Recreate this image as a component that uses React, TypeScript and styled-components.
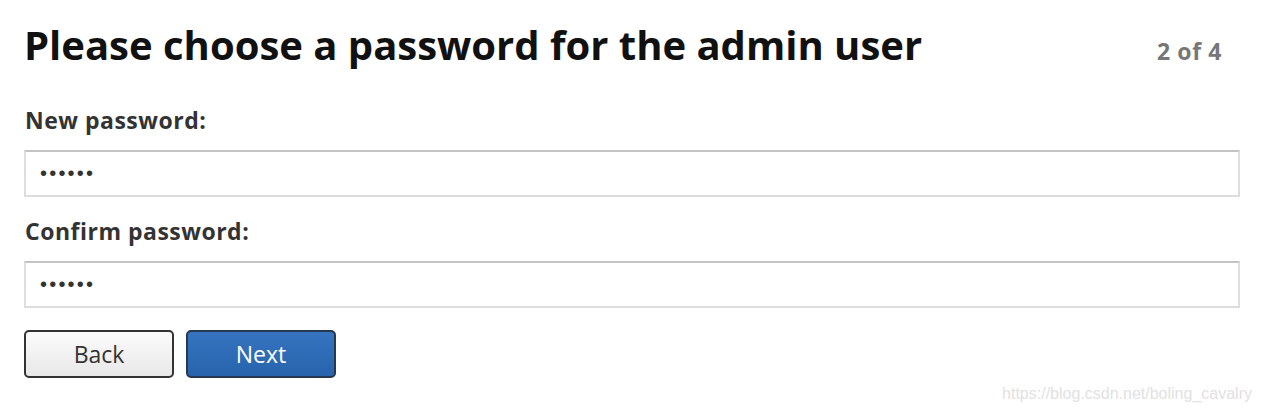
import React from 'react';
import styled, { createGlobalStyle } from 'styled-components';

const GlobalStyle = createGlobalStyle`
  body {
    margin: 0;
    background: #ffffff;
    font-family: 'Open Sans', 'Liberation Sans', sans-serif;
  }
`;

const Page = styled.div`
  position: relative;
  width: 1262px;
  height: 412px;
  padding: 0 22px 0 24px;
  box-sizing: border-box;
  overflow: hidden;
`;

const Header = styled.div`
  display: flex;
  align-items: baseline;
  justify-content: space-between;
  padding-top: 19px;
  padding-right: 18px;
`;

const Title = styled.h1`
  margin: 0;
  font-size: 40px;
  font-weight: 700;
  color: #111111;
  line-height: 52px;
`;

const Step = styled.span`
  font-size: 23px;
  font-weight: 700;
  color: #777777;
  letter-spacing: 0.6px;
`;

const Form = styled.form`
  display: flex;
  flex-direction: column;
  margin-top: 35px;
`;

const Label = styled.label`
  font-size: 23px;
  font-weight: 700;
  color: #333333;
  line-height: 28px;
  letter-spacing: 0.5px;
  margin-bottom: 16px;
  padding-left: 1px;
`;

const Input = styled.input`
  height: 47px;
  box-sizing: border-box;
  border: 2px solid #dddddd;
  border-top-color: #c4c4c4;
  padding: 0 14px;
  font-size: 20px;
  letter-spacing: 2.2px;
  color: #333333;
  font-family: 'Liberation Sans', sans-serif;
  margin-bottom: 20px;
  outline: none;
`;

const Actions = styled.div`
  display: flex;
  gap: 12px;
  margin-top: 2px;
`;

const Button = styled.button<{ $primary?: boolean }>`
  width: 150px;
  height: 48px;
  box-sizing: border-box;
  border-radius: 5px;
  border: 2px solid ${(p) => (p.$primary ? '#263950' : '#333333')};
  background: ${(p) =>
    p.$primary
      ? 'linear-gradient(#3574c0, #2864ad)'
      : 'linear-gradient(#fbfbfb, #e8e8e8)'};
  color: ${(p) => (p.$primary ? '#ffffff' : '#333333')};
  font-family: 'Open Sans', 'Liberation Sans', sans-serif;
  font-size: 23px;
  font-weight: 400;
  padding: 0;
  cursor: pointer;
`;

const Watermark = styled.div`
  position: absolute;
  right: 10px;
  bottom: 9px;
  font-family: 'Liberation Sans', sans-serif;
  font-size: 16px;
  color: #e2e2e2;
`;

export default function App() {
  return (
    <Page>
      <GlobalStyle />
      <Header>
        <Title>Please choose a password for the admin user</Title>
        <Step>2 of 4</Step>
      </Header>
      <Form onSubmit={(e) => e.preventDefault()}>
        <Label>New password:</Label>
        <Input type="password" defaultValue="secret" />
        <Label>Confirm password:</Label>
        <Input type="password" defaultValue="secret" />
        <Actions>
          <Button type="button">Back</Button>
          <Button type="button" $primary>Next</Button>
        </Actions>
      </Form>
      <Watermark>https://blog.csdn.net/boling_cavalry</Watermark>
    </Page>
  );
}
